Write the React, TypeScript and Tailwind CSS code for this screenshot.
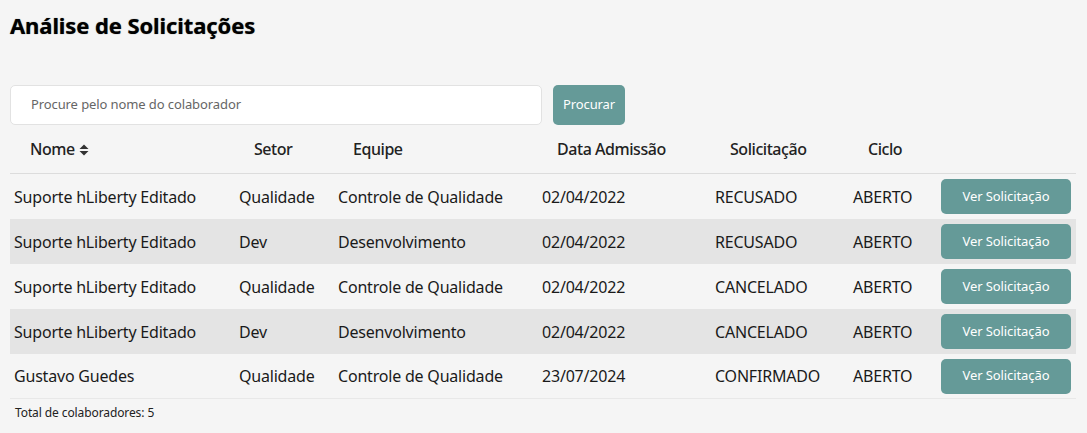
import React from "react";

const rows = [
  { nome: "Suporte hLiberty Editado", setor: "Qualidade", equipe: "Controle de Qualidade", data: "02/04/2022", sol: "RECUSADO", ciclo: "ABERTO" },
  { nome: "Suporte hLiberty Editado", setor: "Dev", equipe: "Desenvolvimento", data: "02/04/2022", sol: "RECUSADO", ciclo: "ABERTO" },
  { nome: "Suporte hLiberty Editado", setor: "Qualidade", equipe: "Controle de Qualidade", data: "02/04/2022", sol: "CANCELADO", ciclo: "ABERTO" },
  { nome: "Suporte hLiberty Editado", setor: "Dev", equipe: "Desenvolvimento", data: "02/04/2022", sol: "CANCELADO", ciclo: "ABERTO" },
  { nome: "Gustavo Guedes", setor: "Qualidade", equipe: "Controle de Qualidade", data: "23/07/2024", sol: "CONFIRMADO", ciclo: "ABERTO" },
];

const cols = "grid grid-cols-[225px_99px_204px_173px_138px_88px_139px]";

export default function App() {
  return (
    <div className="min-h-[433px] w-full bg-[#f5f5f5] text-[#1a1a1a] px-[10px] pt-[9px] font-['Noto_Sans',sans-serif]">
      <h1 className="text-[22px] leading-[32px] font-bold text-black tracking-[-0.1px] [text-shadow:0_0_1px_rgba(0,0,0,0.6)]">
        Análise de Solicitações
      </h1>
      <div className="mt-[44px] flex items-center gap-[11px]">
        <div className="w-[532px] h-[40px] bg-white border border-[#e2e2e2] rounded-[5px] flex items-center pl-[20px] text-[13px] text-[#666] tracking-[-0.1px]">
          Procure pelo nome do colaborador
        </div>
        <button className="w-[72px] h-[40px] rounded-[5px] bg-[#659a98] text-white text-[13px] tracking-[-0.1px]">Procurar</button>
      </div>
      <div className="w-[1066px] mt-0">
        <div className={`${cols} h-[49px] items-center border-b border-[#dcdcdc] text-[16px] font-medium text-[#222] tracking-[-0.45px]`}>
          <div className="pl-[20px] flex items-center gap-[4px]">
            Nome
            <svg width="10" height="12" viewBox="0 0 10 12" className="mt-[1px]">
              <path d="M5 0.5 L9.5 5 L0.5 5 Z" fill="#333" />
              <path d="M5 11.5 L9.5 7 L0.5 7 Z" fill="#333" />
            </svg>
          </div>
          <div className="pl-[19px]">Setor</div>
          <div className="pl-[19px]">Equipe</div>
          <div className="pl-[19px]">Data Admissão</div>
          <div className="pl-[19px]">Solicitação</div>
          <div className="pl-[19px]">Ciclo</div>
          <div />
        </div>
        {rows.map((r, i) => (
          <div
            key={i}
            className={`${cols} h-[45px] items-center text-[16px] tracking-[-0.2px] ${i % 2 === 1 ? "bg-[#e4e4e4]" : "bg-[#f5f5f5]"} ${i === rows.length - 1 ? "border-b border-[#e8e8e8]" : ""}`}
          >
            <div className="pl-[4px]">{r.nome}</div>
            <div className="pl-[4px]">{r.setor}</div>
            <div className="pl-[4px]">{r.equipe}</div>
            <div className="pl-[4px]">{r.data}</div>
            <div className="pl-[4px]">{r.sol}</div>
            <div className="pl-[4px]">{r.ciclo}</div>
            <div className="pl-[4px]">
              <button className="w-[130px] h-[35px] rounded-[5px] bg-[#659a98] text-white text-[13px] tracking-[-0.1px]">Ver Solicitação</button>
            </div>
          </div>
        ))}
        <div className="pt-[5px] pl-[5px] text-[12px] text-[#222] tracking-[-0.1px]">Total de colaboradores: 5</div>
      </div>
    </div>
  );
}
